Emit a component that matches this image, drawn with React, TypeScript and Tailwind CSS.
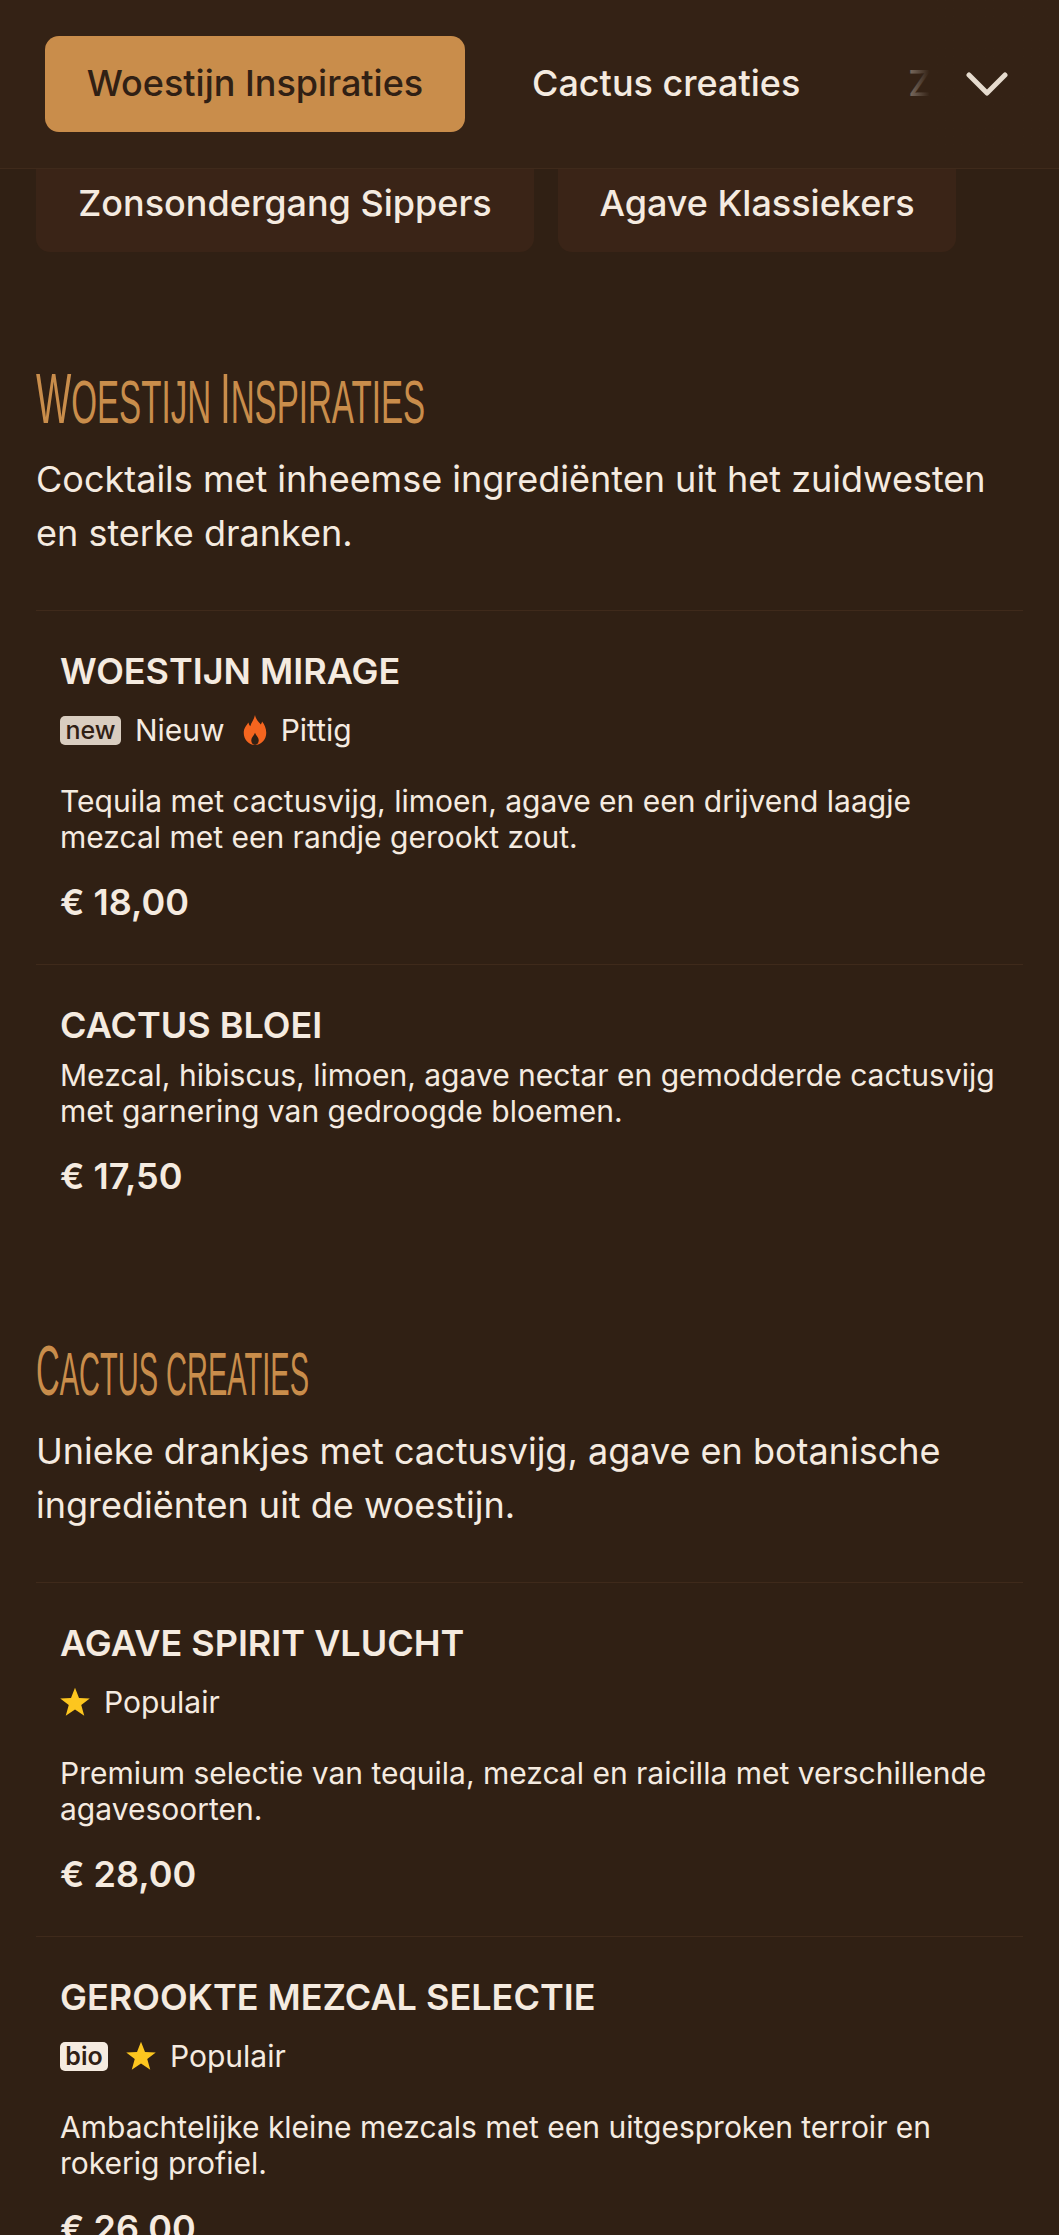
import React from "react";

function Chevron() {
  return (
    <svg viewBox="0 0 42 24" className="w-[42px] h-[24px] shrink-0" fill="none" stroke="#e6dbce" strokeWidth="5" strokeLinecap="round" strokeLinejoin="round">
      <polyline points="3,3 21,21 39,3" />
    </svg>
  );
}

function Star() {
  return (
    <svg viewBox="0 0 24 24" className="w-[30px] h-[30px] shrink-0" fill="#fdc61f">
      <path d="M12 .5l3.200 8.200 8.600.4-6.800 5.300 2.400 8.600L12 17.900 4.600 23l2.400-8.600L.2 9.100l8.600-.4z" />
    </svg>
  );
}

function Flame() {
  return (
    <svg viewBox="0 0 24 32" className="w-[24px] h-[30px] shrink-0">
      <path fill="#f4651f" d="M12 0C13 5 16 7 18 10C19 9 19.500 8 19.500 7C22 10 24 14 24 19C24 26 19 32 12 32C5 32 0 26 0 19C0 14 3 11 5 8C5.500 10 6 11 7 12C8 8 11 5 12 0z" />
      <path fill="#302014" d="M12 19C13 22 16 24 16 27C16 30 14 32 12 32C10 32 8 30 8 27C8 24 11 22 12 19z" />
    </svg>
  );
}

function Tag({ text, light }: { text: string; light?: boolean }) {
  return (
    <span className={"inline-flex items-center justify-center h-[29px] rounded-[5px] text-[25px] leading-none text-[#302014] " + (light ? "w-[48px] bg-[#f5ebe0] font-semibold" : "w-[61px] bg-[#d9cdc0] font-medium")}>
      {text}
    </span>
  );
}

function Item({ title, tags, desc, price }: { title: string; tags?: React.ReactNode; desc: React.ReactNode; price: string }) {
  return (
    <div className="border-t border-[#3f2a1b] px-[24px] pt-[38px] pb-[40px]">
      <h3 className="text-[36px] leading-[44px] mb-[10px] font-semibold text-[#f5ebe0] uppercase">{title}</h3>
      {tags && <div className="flex items-center h-[34px] mt-[20px] mb-[36px] text-[30px] text-[#f5ebe0]">{tags}</div>}
      <p className="text-[30px] leading-[36px] text-[#f5ebe0]">{desc}</p>
      <div className="mt-[25px] text-[36px] leading-[44px] font-semibold text-[#f5ebe0]">{price}</div>
    </div>
  );
}

function Title({ parts, narrow }: { parts: [string, string][]; narrow?: boolean }) {
  return (
    <h2 className={"h-[70px] w-[900px] origin-left whitespace-nowrap text-[#c98d4b] font-['Liberation_Sans',sans-serif] leading-[70px] font-normal " + (narrow ? "scale-x-[0.468]" : "scale-x-[0.534]")}>
      {parts.map(([t, s], i) => (
        <span key={i} className={s === "big" ? "text-[70px]" : "text-[62px]"}>{t}</span>
      ))}
    </h2>
  );
}

export default function App() {
  return (
    <div className="w-[1059px] h-[2235px] overflow-hidden bg-[#302014] font-['Inter',sans-serif]">
      <header className="relative h-[169px] bg-[#342215] border-b border-[#3f2a1b] flex items-center pl-[45px] overflow-hidden">
        <div className="flex items-center whitespace-nowrap text-[36px] font-medium">
          <button className="h-[96px] w-[420px] shrink-0 pb-[2px] rounded-[14px] bg-[#c98d4b] text-[#302014]">Woestijn Inspiraties</button>
          <span className="ml-[67px] -mt-[2px] text-[#f5ebe0]">Cactus creaties</span>
          <span className="ml-[108px] -mt-[2px] text-[#f5ebe0]">Zonsondergang</span>
        </div>
        <div className="absolute right-0 top-0 bottom-0 w-[185px] flex items-center justify-end pr-[51px] bg-gradient-to-r from-transparent to-[#342215] to-[30%]">
          <Chevron />
        </div>
      </header>
      <div className="flex gap-[24px] pl-[36px] text-[36px] font-medium text-[#f5ebe0] whitespace-nowrap">
        <div className="h-[83px] w-[498px] pb-[16px] rounded-b-[14px] bg-[#3a2417] flex items-center justify-center">Zonsondergang Sippers</div>
        <div className="h-[83px] w-[398px] pb-[16px] rounded-b-[14px] bg-[#3a2417] flex items-center justify-center">Agave Klassiekers</div>
      </div>
      <main className="px-[36px] pt-[112px]">
        <section>
          <Title parts={[["W", "big"], ["OESTIJN ", "s"], ["I", "big"], ["NSPIRATIES", "s"]]} />
          <p className="mt-[18px] text-[36px] leading-[54px] text-[#f5ebe0]">Cocktails met inheemse ingrediënten uit het zuidwesten en sterke dranken.</p>
          <div className="mt-[50px]">
            <Item title="Woestijn Mirage" tags={<><Tag text="new" /><span className="ml-[14px]">Nieuw</span><span className="ml-[18px]"><Flame /></span><span className="ml-[14px]">Pittig</span></>} desc="Tequila met cactusvijg, limoen, agave en een drijvend laagje mezcal met een randje gerookt zout." price="€ 18,00" />
            <Item title="Cactus Bloei" desc="Mezcal, hibiscus, limoen, agave nectar en gemodderde cactusvijg met garnering van gedroogde bloemen." price="€ 17,50" />
          </div>
        </section>
        <section className="mt-[98px]">
          <Title narrow parts={[["C", "big"], ["ACTUS CREATIES", "s"]]} />
          <p className="mt-[18px] text-[36px] leading-[54px] text-[#f5ebe0]">Unieke drankjes met cactusvijg, agave en botanische ingrediënten uit de woestijn.</p>
          <div className="mt-[50px]">
            <Item title="Agave Spirit Vlucht" tags={<><Star /><span className="ml-[14px]">Populair</span></>} desc="Premium selectie van tequila, mezcal en raicilla met verschillende agavesoorten." price="€ 28,00" />
            <Item title="Gerookte Mezcal Selectie" tags={<><Tag text="bio" light /><span className="ml-[18px]"><Star /></span><span className="ml-[14px]">Populair</span></>} desc="Ambachtelijke kleine mezcals met een uitgesproken terroir en rokerig profiel." price="€ 26,00" />
          </div>
        </section>
      </main>
    </div>
  );
}
